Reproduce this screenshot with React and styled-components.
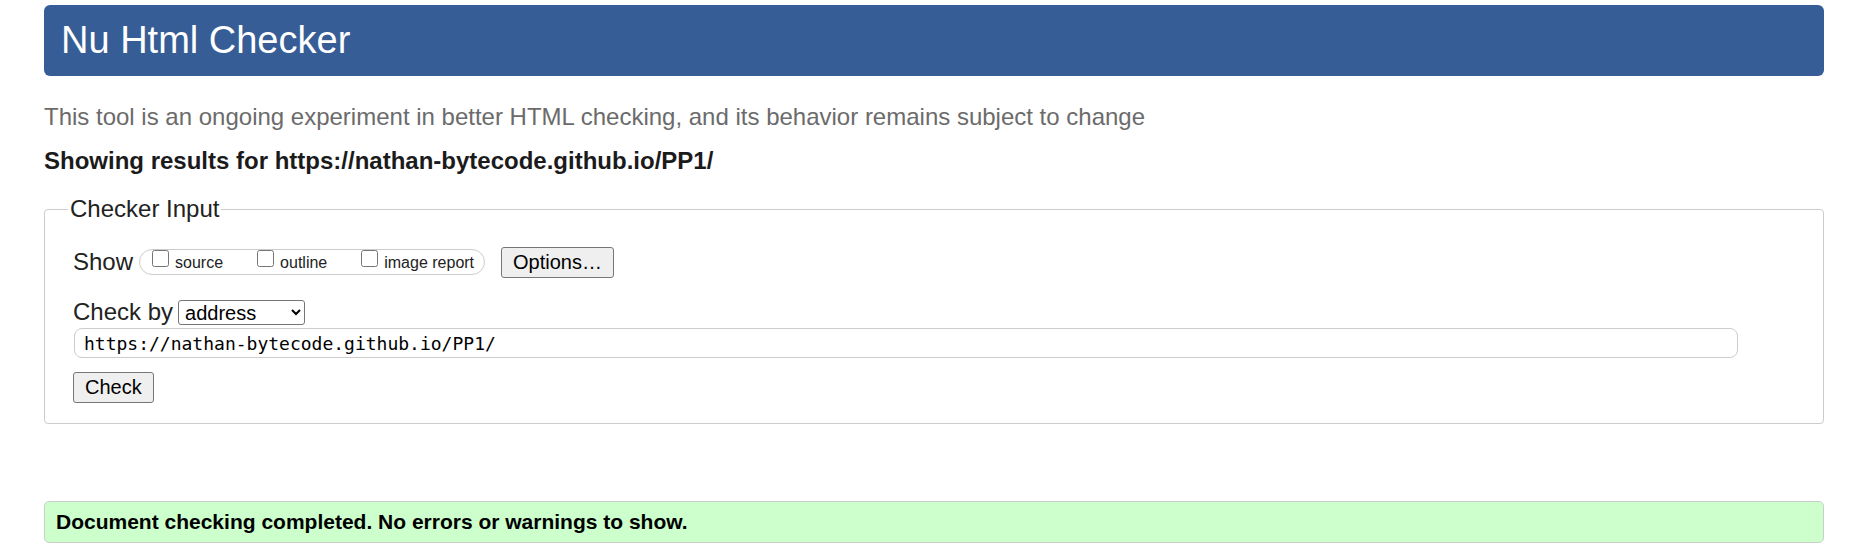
import React from 'react';
import styled, { createGlobalStyle } from 'styled-components';

const GlobalStyle = createGlobalStyle`
  body {
    margin: 0;
    background: #fff;
    color: #222;
    font-family: "Liberation Sans", Arial, sans-serif;
  }
`;

const Page = styled.div`
  width: 1780px;
  padding: 5px 0 0 44px;
`;

const Header = styled.h1`
  margin: 0;
  height: 71px;
  box-sizing: border-box;
  padding-left: 17px;
  background: #365d95;
  color: #fff;
  border-radius: 6px;
  font-size: 38px;
  font-weight: normal;
  line-height: 71px;
`;

const Tagline = styled.p`
  margin: 27px 0 0;
  font-size: 24px;
  line-height: 28px;
  color: #6b6b6b;
`;

const Results = styled.p`
  margin: 16px 0 0;
  font-size: 24px;
  line-height: 28px;
  font-weight: bold;
  color: #1b1b1b;
`;

const Fieldset = styled.fieldset`
  margin: 20px 0 0;
  padding: 23px 28px 20px;
  border: 1px solid #ccc;
  border-radius: 4px;
  min-width: 0;
`;

const Legend = styled.legend`
  margin-left: -5px;
  padding: 0 2px;
  font-size: 24px;
  line-height: 28px;
  color: #222;
`;

const Row = styled.div`
  display: flex;
  align-items: center;
  height: ${p => p.$h}px;
  margin-top: ${p => p.$mt || 0}px;
`;

const Label = styled.span`
  font-size: 24px;
  color: #222;
`;

const Pill = styled.div`
  display: flex;
  height: 26px;
  box-sizing: border-box;
  margin-left: 6px;
  padding: 0 10px 0 12px;
  border: 1px solid #ccc;
  border-radius: 13px;
`;

const Option = styled.label`
  display: flex;
  height: 100%;
  margin-right: ${p => (p.$last ? 0 : 34)}px;
`;

const Box = styled.input`
  width: 17px;
  height: 17px;
  margin: 0 6px 0 0;
  align-self: flex-start;
`;

const Small = styled.span`
  align-self: flex-end;
  margin-bottom: 3px;
  font-size: 16px;
  line-height: 16px;
  color: #222;
`;

const Button = styled.button`
  height: 31px;
  margin-left: ${p => p.$ml || 0}px;
  padding: 0 ${p => p.$px || 10}px;
  background: #efefef;
  border: 1px solid #767676;
  border-radius: 3px;
  color: #000;
  font-family: "Liberation Sans", Arial, sans-serif;
  font-size: 20px;
`;

const Select = styled.select`
  width: 127px;
  height: 25px;
  margin-left: 5px;
  padding: 0 0 0 2px;
  background: #fff;
  border: 1px solid #767676;
  border-radius: 3px;
  color: #000;
  font-family: "Liberation Sans", Arial, sans-serif;
  font-size: 20px;
`;

const UrlInput = styled.input`
  display: block;
  width: calc(100% - 58px);
  height: 30px;
  box-sizing: border-box;
  margin: 2px 0 0 1px;
  padding: 0 9px;
  border: 1px solid #ccc;
  border-radius: 8px;
  color: #000;
  font-family: "DejaVu Sans Mono", "Liberation Mono", monospace;
  font-size: 18px;
`;

const Success = styled.div`
  margin-top: 77px;
  height: 42px;
  box-sizing: border-box;
  padding-left: 11px;
  background: #ccffcc;
  border: 1px solid #ccc;
  border-radius: 5px;
  color: #000;
  font-size: 21px;
  font-weight: bold;
  line-height: 40px;
`;

const showOptions = ['source', 'outline', 'image report'];

export default function App() {
  return (
    <Page>
      <GlobalStyle />
      <Header>Nu Html Checker</Header>
      <Tagline>
        This tool is an ongoing experiment in better HTML checking, and its behavior remains subject to change
      </Tagline>
      <Results>Showing results for https://nathan-bytecode.github.io/PP1/</Results>

      <Fieldset>
        <Legend>Checker Input</Legend>
        <Row $h={32}>
          <Label>Show</Label>
          <Pill>
            {showOptions.map((o, i) => (
              <Option key={o} $last={i === showOptions.length - 1}>
                <Box type="checkbox" />
                <Small>{o}</Small>
              </Option>
            ))}
          </Pill>
          <Button $ml={16} $px={11}>Options…</Button>
        </Row>
        <Row $h={28} $mt={20}>
          <Label>Check by</Label>
          <Select defaultValue="address">
            <option value="address">address</option>
            <option value="file">file upload</option>
            <option value="text">text input</option>
          </Select>
        </Row>
        <UrlInput type="url" defaultValue="https://nathan-bytecode.github.io/PP1/" />
        <Row $h={31} $mt={14}>
          <Button $px={11}>Check</Button>
        </Row>
      </Fieldset>

      <Success>Document checking completed. No errors or warnings to show.</Success>
    </Page>
  );
}
